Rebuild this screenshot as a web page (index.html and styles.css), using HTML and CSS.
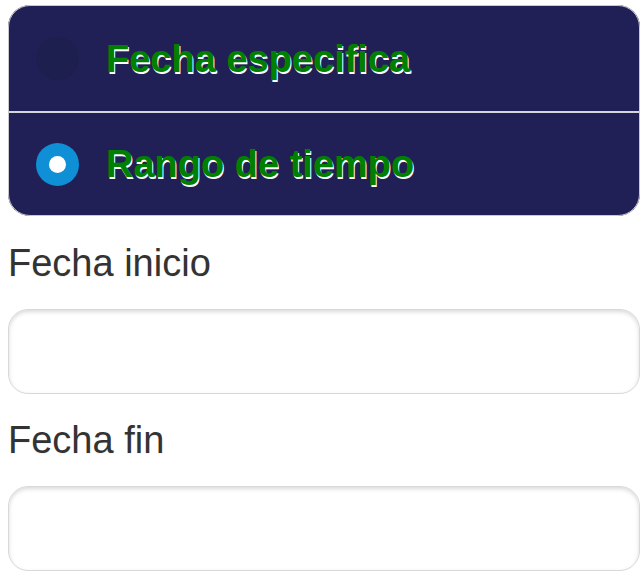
FILE: index.html
```html
<!DOCTYPE html>
<html lang="es">
<head>
<meta charset="utf-8">
<title>Fechas</title>
<link rel="stylesheet" href="styles.css">
</head>
<body>
<div class="page">
  <fieldset class="choice-group">
    <label class="option">
      <span class="radio"></span>
      <span class="option-text">Fecha especifica</span>
    </label>
    <label class="option option-last">
      <span class="radio radio-on"></span>
      <span class="option-text">Rango de tiempo</span>
    </label>
  </fieldset>
  <label class="field-label">Fecha inicio</label>
  <div class="field"></div>
  <label class="field-label">Fecha fin</label>
  <div class="field"></div>
</div>
</body>
</html>
```

FILE: styles.css
```css
html, body {
  margin: 0;
  padding: 0;
  background: #ffffff;
}

body {
  font-family: "Liberation Sans", Arial, sans-serif;
  font-size: 38px;
}

.page {
  display: flex;
  flex-direction: column;
  padding: 5px 2px 0 8px;
}

.choice-group {
  margin: 0 0 24px 0;
  padding: 0;
  min-width: 0;
  border: 1px solid #c9c9cf;
  border-radius: 22px;
  background: #202056;
  overflow: hidden;
  display: flex;
  flex-direction: column;
}

.option {
  display: flex;
  align-items: center;
  height: 105px;
  padding-left: 27px;
  box-sizing: border-box;
}

.option-last {
  height: 104px;
  border-top: 2px solid #d6d6da;
}

.radio {
  width: 43px;
  height: 43px;
  border-radius: 50%;
  background: #1d1f4e;
  box-sizing: border-box;
  flex: none;
}

.radio-on {
  background: #0f8fd6;
  display: flex;
  align-items: center;
  justify-content: center;
}

.radio-on::after {
  content: "";
  width: 17px;
  height: 17px;
  border-radius: 50%;
  background: #ffffff;
}

.option-text {
  margin-left: 27px;
  color: #008000;
  font-weight: bold;
  font-size: 38px;
  text-shadow: 1px 2px 0 #ffffff;
  line-height: 1;
}

.field-label {
  display: block;
  color: #333333;
  line-height: 46px;
  margin-bottom: 23px;
  text-shadow: 0 1px 0 #f3f3f3;
}

.field {
  height: 85px;
  box-sizing: border-box;
  border: 1px solid #d8d8d8;
  border-radius: 20px;
  background: #ffffff;
  box-shadow: inset 0 2px 4px rgba(0, 0, 0, 0.15);
  margin-bottom: 23px;
}
```
